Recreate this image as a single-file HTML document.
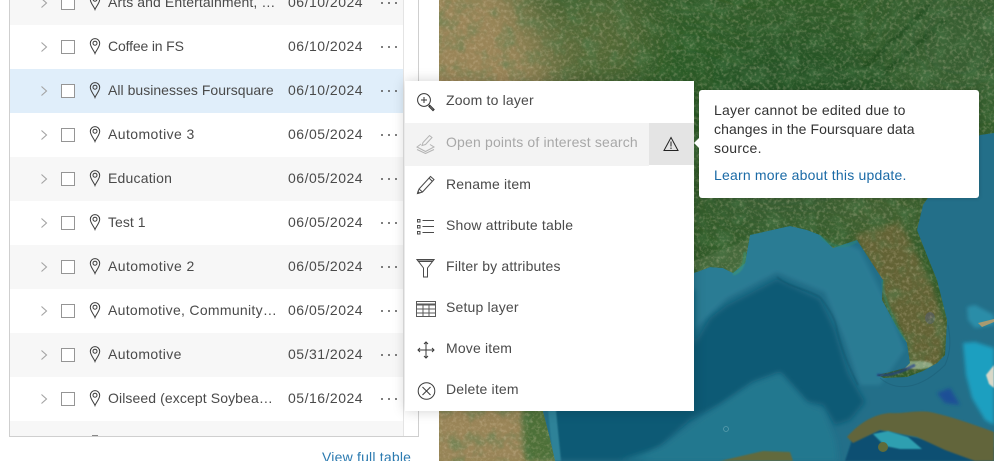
<!DOCTYPE html>
<html><head><meta charset="utf-8">
<style>
html,body{margin:0;padding:0;width:994px;height:461px;overflow:hidden;background:#fff;font-family:"Liberation Sans",sans-serif;font-size:14px;color:#4a4a4a}
.a{position:absolute}
#page{position:absolute;left:0;top:0;width:994px;height:461px;overflow:hidden}
.row{position:absolute;left:10px;width:393px;height:44px}
.row .ch{position:absolute;left:30px;top:16px}
.row .cb{position:absolute;left:51px;top:15px;width:12px;height:12px;border:1px solid #959595;background:#fff}
.row .pin{position:absolute;left:78px;top:12px}
.row .t{position:absolute;left:98px;top:13px;line-height:16px;white-space:nowrap;letter-spacing:.03px}
.row .d{position:absolute;left:278px;top:13px;line-height:16px;letter-spacing:.5px}
.row .m{position:absolute;left:370px;top:20px}
.mi{position:absolute;left:446px;white-space:nowrap;line-height:16px;color:#4a4a4a;letter-spacing:.17px}
.ic{position:absolute;left:416px}
#tip div{position:absolute;left:15px;white-space:nowrap;line-height:19px;color:#323232;letter-spacing:.26px}
</style></head><body>
<div id="page">
<svg width="0" height="0" style="position:absolute">
<symbol id="ch" viewBox="0 0 8 12"><path d="M1.500 1.500 6.500 6l-5 4.500" fill="none" stroke="#a3a3a3" stroke-width="1.100"/></symbol>
<symbol id="pin" viewBox="0 0 14 18"><path d="M7 16.500C6 13.500 2.300 10 2.300 6.300a4.700 4.700 0 0 1 9.400 0C11.700 10 8 13.500 7 16.500Z" fill="none" stroke="#3a3a3a" stroke-width="1"/><circle cx="7" cy="6.200" r="2" fill="none" stroke="#3a3a3a" stroke-width="1"/></symbol>
<symbol id="dots" viewBox="0 0 18 4"><circle cx="2" cy="2" r="1" fill="#555"/><circle cx="9" cy="2" r="1" fill="#555"/><circle cx="16" cy="2" r="1" fill="#555"/></symbol>
</svg>

<!-- map -->
<svg class="a" style="left:439px;top:0" width="555" height="461" viewBox="439 0 555 461">
<defs>
<filter id="b4" x="-20%" y="-20%" width="140%" height="140%"><feGaussianBlur stdDeviation="3"/></filter>
<filter id="b8" x="-20%" y="-20%" width="140%" height="140%"><feGaussianBlur stdDeviation="7"/></filter>
<filter id="b1"><feGaussianBlur stdDeviation=".8"/></filter>
<filter id="b2" x="-20%" y="-20%" width="140%" height="140%"><feGaussianBlur stdDeviation="1.800"/></filter>
<filter id="b25" x="-30%" y="-30%" width="160%" height="160%"><feGaussianBlur stdDeviation="22"/></filter>
<filter id="noise" x="0" y="0" width="100%" height="100%"><feTurbulence type="fractalNoise" baseFrequency=".3" numOctaves="3" seed="7"/><feColorMatrix values="0 0 0 0 .8  0 0 0 0 .68  0 0 0 0 .48  2.500 0 0 0 -1.150"/></filter>
<filter id="noise2" x="0" y="0" width="100%" height="100%"><feTurbulence type="fractalNoise" baseFrequency=".06" numOctaves="3" seed="12"/><feColorMatrix values="0 0 0 0 .08  0 0 0 0 .22  0 0 0 0 .08  2.500 0 0 0 -1.100"/></filter>
<clipPath id="land"><path d="M439 0H994V133L980 135 960 150 940 180 923 205 917 230 928 258 937 280 947 320 945 355 937 363 923 371 907 377 884 378 877 375 890 372 905 368 910 363 907 343 897 327 882 300 883 280 870 260 857 240 833 248 820 235 807 230 790 226 750 235 745 263 733 273 723 268 710 267 694 273 620 300 560 340 543 385 543 412 549 435 555 461H439Z"/></clipPath>
<clipPath id="frame"><rect x="439" y="0" width="555" height="461"/></clipPath>
</defs>
<g clip-path="url(#frame)">
<rect x="439" y="0" width="555" height="461" fill="#236f89"/>
<path d="M694 225L810 225 860 250 885 300 905 350 880 385 860 385 845 340 825 292 777 272 727 298 694 330Z" fill="#2a7c94" filter="url(#b2)"/>
<!-- deep gulf -->
<path d="M540 290H694V345L710 318 727 305 760 288 777 279 820 299 835 330 848 373 865 402 850 420 835 425 823 405 807 402 780 372 753 382 720 405 690 420 662 445 640 461H558L552 420 550 380Z" fill="#0d5a74" filter="url(#b4)"/>
<path d="M620 461L662 447 700 419 753 384 780 374 807 404 823 410 835 440 838 461Z" fill="#24788f" filter="url(#b4)"/>
<path d="M845 461L852 440 880 430 960 447 994 447V461Z" fill="#0c4f72" filter="url(#b1)"/>
<path d="M545 380L553 380 561 461H553Z" fill="#2f8298" filter="url(#b1)"/>
<!-- shelf edge lines -->
<path d="M777 277C790 288 805 288 820 297 830 310 836 320 837 330 842 350 848 365 858 385" fill="none" stroke="#0a4359" stroke-width="1" opacity=".5" filter="url(#b1)"/>
<path d="M880 378C900 395 925 385 945 365 952 350 950 335 948 325" fill="none" stroke="#174f68" stroke-width="1" opacity=".3"/>
<!-- land -->
<g clip-path="url(#land)">
<rect x="439" y="0" width="555" height="461" fill="#325c2a"/>
<g filter="url(#b25)">
<path d="M400 -40H510L550 60 560 200 540 330 590 500H400Z" fill="#9a8559"/>
<ellipse cx="600" cy="40" rx="50" ry="50" fill="#566b38"/>
<ellipse cx="690" cy="80" rx="60" ry="60" fill="#2a5c26"/>
<ellipse cx="800" cy="100" rx="90" ry="70" fill="#285527"/>
<ellipse cx="960" cy="40" rx="70" ry="70" fill="#385f32"/>
<ellipse cx="780" cy="190" rx="70" ry="30" fill="#3b5f34"/>
<ellipse cx="880" cy="215" rx="50" ry="22" fill="#486436"/>
</g>
<path d="M855 235L900 222 930 280 947 330 940 365 910 370 905 340 880 290Z" fill="#646436" filter="url(#b4)"/>
<path d="M520 380L550 380 560 461H525Z" fill="#4d6f38" filter="url(#b4)"/>
<path d="M690 262C710 255 735 245 750 238V272L725 272 700 275Z" fill="#45693a" filter="url(#b1)"/>
<path d="M830 110C860 95 900 60 945 20M790 120C830 100 880 55 930 5" stroke="#1d4a1f" stroke-width="5" fill="none" opacity=".6" filter="url(#b1)"/>
<ellipse cx="930" cy="318" rx="5" ry="6" fill="#5a5f55"/>
<ellipse cx="917" cy="365" rx="16" ry="4" fill="#a8c8a8" opacity=".7" filter="url(#b1)"/>
<rect x="439" y="0" width="555" height="461" filter="url(#noise2)" opacity=".45"/>
<rect x="439" y="0" width="555" height="461" filter="url(#noise)" opacity=".3"/>
</g>
<!-- FL edges -->
<path d="M877 375C890 377 905 370 915 365" stroke="#23408a" stroke-width="3" fill="none" opacity=".7" filter="url(#b1)"/>
<path d="M733 274C742 272 745 262 745 252" stroke="#3c9a78" stroke-width="3" fill="none" opacity=".6" filter="url(#b1)"/>
<path d="M883 280C881 295 892 318 905 340" stroke="#2f8a70" stroke-width="2.500" fill="none" opacity=".5" filter="url(#b1)"/>
<path d="M820 236C835 250 845 248 857 241" stroke="#2f8a70" stroke-width="2.500" fill="none" opacity=".5" filter="url(#b1)"/>
<!-- Bahamas -->
<path d="M963 343L975 342 994 348V425L985 420 972 398 966 375Z" fill="#1f9fc0" filter="url(#b2)"/>
<path d="M986 375L994 365V388L989 384Z" fill="#d8d8c8" filter="url(#b1)"/>
<path d="M967 307L975 305 994 315V325L975 328 968 320Z" fill="#2b8da8" filter="url(#b2)"/>
<path d="M978 323L994 319V322L982 327Z" fill="#a89a70"/>
<path d="M937 393L950 388 960 405 945 403Z" fill="#1b5096" filter="url(#b2)"/>
<!-- Cuba -->
<path d="M847 437C860 422 875 414 890 413 905 414 915 410 930 412 950 416 975 425 994 432V461H975L945 450 917 437 880 430 853 443Z" fill="#62653a" filter="url(#b1)"/>
<path d="M873 434L888 431 908 437 922 449 900 449 885 446Z" fill="#2f9fb0" filter="url(#b1)"/>
<ellipse cx="883" cy="447" rx="5" ry="5" fill="#5f6b3a"/>
<!-- Yucatan -->
<path d="M720 461L763 451 790 452 793 461Z" fill="#626a3c" filter="url(#b1)"/>
<circle cx="726" cy="429" r="2.500" fill="none" stroke="#7fb5bf" stroke-width=".8" opacity=".6"/>
</g>
</svg>

<!-- table -->
<div class="a" style="left:9px;top:0;width:408px;height:436px;border:1px solid #cfcfcf;border-top:0;background:#fff"></div>
<div class="a" style="left:403px;top:0;width:1px;height:436px;background:#e4e4e4"></div>
<div class="a" style="left:10px;top:0;width:393px;height:25px;background:#f7f7f7"></div>
<div class="a" style="left:10px;top:421px;width:393px;height:15px;background:#f7f7f7"></div>

<div class="row" style="top:-19px;background:#f7f7f7"><svg class="ch" width="8" height="12"><use href="#ch"/></svg><div class="cb"></div><svg class="pin" width="14" height="18"><use href="#pin"/></svg><div class="t" style="letter-spacing:.1px">Arts and Entertainment, …</div><div class="d">06/10/2024</div><svg class="m" width="18" height="4"><use href="#dots"/></svg></div>
<div class="row" style="top:25px"><svg class="ch" width="8" height="12"><use href="#ch"/></svg><div class="cb"></div><svg class="pin" width="14" height="18"><use href="#pin"/></svg><div class="t" style="letter-spacing:-.15px">Coffee in FS</div><div class="d">06/10/2024</div><svg class="m" width="18" height="4"><use href="#dots"/></svg></div>
<div class="row" style="top:69px;background:#e0eefa"><svg class="ch" width="8" height="12"><use href="#ch"/></svg><div class="cb"></div><svg class="pin" width="14" height="18"><use href="#pin"/></svg><div class="t">All businesses Foursquare</div><div class="d">06/10/2024</div><svg class="m" width="18" height="4"><use href="#dots"/></svg></div>
<div class="row" style="top:113px"><svg class="ch" width="8" height="12"><use href="#ch"/></svg><div class="cb"></div><svg class="pin" width="14" height="18"><use href="#pin"/></svg><div class="t" style="letter-spacing:.42px">Automotive 3</div><div class="d">06/05/2024</div><svg class="m" width="18" height="4"><use href="#dots"/></svg></div>
<div class="row" style="top:157px;background:#f7f7f7"><svg class="ch" width="8" height="12"><use href="#ch"/></svg><div class="cb"></div><svg class="pin" width="14" height="18"><use href="#pin"/></svg><div class="t" style="letter-spacing:.2px">Education</div><div class="d">06/05/2024</div><svg class="m" width="18" height="4"><use href="#dots"/></svg></div>
<div class="row" style="top:201px"><svg class="ch" width="8" height="12"><use href="#ch"/></svg><div class="cb"></div><svg class="pin" width="14" height="18"><use href="#pin"/></svg><div class="t">Test 1</div><div class="d">06/05/2024</div><svg class="m" width="18" height="4"><use href="#dots"/></svg></div>
<div class="row" style="top:245px;background:#f7f7f7"><svg class="ch" width="8" height="12"><use href="#ch"/></svg><div class="cb"></div><svg class="pin" width="14" height="18"><use href="#pin"/></svg><div class="t" style="letter-spacing:.42px">Automotive 2</div><div class="d">06/05/2024</div><svg class="m" width="18" height="4"><use href="#dots"/></svg></div>
<div class="row" style="top:289px"><svg class="ch" width="8" height="12"><use href="#ch"/></svg><div class="cb"></div><svg class="pin" width="14" height="18"><use href="#pin"/></svg><div class="t" style="letter-spacing:.3px">Automotive, Community…</div><div class="d">06/05/2024</div><svg class="m" width="18" height="4"><use href="#dots"/></svg></div>
<div class="row" style="top:333px;background:#f7f7f7"><svg class="ch" width="8" height="12"><use href="#ch"/></svg><div class="cb"></div><svg class="pin" width="14" height="18"><use href="#pin"/></svg><div class="t" style="letter-spacing:.38px">Automotive</div><div class="d">05/31/2024</div><svg class="m" width="18" height="4"><use href="#dots"/></svg></div>
<div class="row" style="top:377px"><svg class="ch" width="8" height="12"><use href="#ch"/></svg><div class="cb"></div><svg class="pin" width="14" height="18"><use href="#pin"/></svg><div class="t" style="letter-spacing:.1px">Oilseed (except Soybea…</div><div class="d">05/16/2024</div><svg class="m" width="18" height="4"><use href="#dots"/></svg></div>
<div class="a" style="left:92px;top:435px;width:6px;height:1px;background:#888"></div>

<div class="a" style="left:322px;top:449px;height:12px;overflow:hidden;line-height:16px;color:#2b7ab0;letter-spacing:.2px;white-space:nowrap">View full table</div>

<!-- menu -->
<div class="a" style="left:405px;top:81px;width:289px;height:330px;background:#fff;box-shadow:0 0 12px rgba(0,0,0,.18)"></div>
<div class="a" style="left:405px;top:123px;width:244px;height:43px;background:#f3f3f3"></div>
<div class="a" style="left:649px;top:123px;width:45px;height:42px;background:#e4e4e4"></div>

<div class="mi" style="top:92px">Zoom to layer</div>
<div class="mi" style="top:134px;color:#a8a8a8">Open points of interest search</div>
<div class="mi" style="top:176px">Rename item</div>
<div class="mi" style="top:217px">Show attribute table</div>
<div class="mi" style="top:258px">Filter by attributes</div>
<div class="mi" style="top:299px">Setup layer</div>
<div class="mi" style="top:340px">Move item</div>
<div class="mi" style="top:381px">Delete item</div>

<svg class="ic" style="top:92px" width="20" height="20" viewBox="0 0 20 20" fill="none" stroke="#333"><circle cx="8" cy="8" r="6.400"/><path d="M5 8h6M8 5v6"/><path d="M12.800 12.800 14 14"/><path d="M14 13.500 18 17.500 17 18.500 13 14.500Z" stroke-width="1.200"/></svg>
<svg class="ic" style="top:134px" width="20" height="20" viewBox="0 0 20 20" fill="none" stroke="#b4b4b4"><path d="M5 10 1 13l8.500 4.500L18 13l-4-2.500"/><path d="M1 15.500l8.500 4 8.500-4"/><path d="M6 11.500 7 8.500 13.500 1.500 16 3.500 9.500 10.500 6 11.500Z"/></svg>
<svg class="ic" style="top:175px" width="20" height="20" viewBox="0 0 20 20" fill="none" stroke="#4a4a4a"><path d="M1.500 18.500 3 14 14.500 1.500 18 4.500 6.500 17Z"/><path d="M3 14 6.500 17M13 3l3.500 3.500"/><path d="M1.500 18.500 3.500 18 2 16.500Z" fill="#3a3a3a"/></svg>
<svg class="ic" style="top:217px" width="20" height="20" viewBox="0 0 20 20" fill="none" stroke="#4a4a4a"><rect x="1.500" y="2.500" width="2.500" height="2.500"/><rect x="1.500" y="8.500" width="2.500" height="2.500"/><rect x="1.500" y="14.500" width="2.500" height="2.500"/><path d="M6.500 3.500h11.500M6.500 9.500h11.500M6.500 15.500h11.500"/></svg>
<svg class="ic" style="top:258px" width="20" height="20" viewBox="0 0 20 20" fill="none" stroke="#4a4a4a"><path d="M1 1.500h17L11.500 10v9h-4v-9Z"/><path d="M1 1.500h17l-1.500 2h-14Z" fill="#9a9a9a"/></svg>
<svg class="ic" style="top:299px" width="20" height="20" viewBox="0 0 20 20" fill="none" stroke="#5a5a5a"><rect x=".5" y="2.500" width="19" height="15"/><path d="M.5 5.500h19" stroke-width="2"/><path d="M.5 10h19M.5 14h19M7 5.500v12M13 5.500v12"/></svg>
<svg class="ic" style="top:340px" width="20" height="20" viewBox="0 0 20 20" fill="none" stroke="#3a3a3a"><path d="M2 10h16M10 2v16"/><path d="M4 8 2 10l2 2M16 8l2 2-2 2M8 4l2-2 2 2M8 16l2 2 2-2"/></svg>
<svg class="ic" style="top:381px" width="20" height="20" viewBox="0 0 20 20" fill="none" stroke="#3a3a3a"><circle cx="10.500" cy="10" r="8.300"/><path d="M6.500 6l8 8M14.500 6l-8 8"/></svg>
<svg class="a" style="left:663px;top:136px" width="16" height="16" viewBox="0 0 16 16" fill="none" stroke="#222"><path d="M8 1.500 15 14.500H1Z"/><path d="M8 5.500v5M8 11.500v1.500"/></svg>

<!-- tooltip -->
<div class="a" style="left:694px;top:138px;width:0;height:0;border:5px solid transparent;border-left:0;border-right:5px solid #fff;z-index:3"></div>
<div id="tip" class="a" style="left:699px;top:90px;width:280px;height:108px;background:#fff;border-radius:3px;box-shadow:0 0 4px rgba(0,0,0,.2)">
<div style="top:11px;letter-spacing:.22px">Layer cannot be edited due to</div>
<div style="top:30px;letter-spacing:.1px">changes in the Foursquare data</div>
<div style="top:49px">source.</div>
<div style="top:76px;color:#1a6aa6;letter-spacing:.2px">Learn more about this update.</div>
</div>
</div>
</body></html>
